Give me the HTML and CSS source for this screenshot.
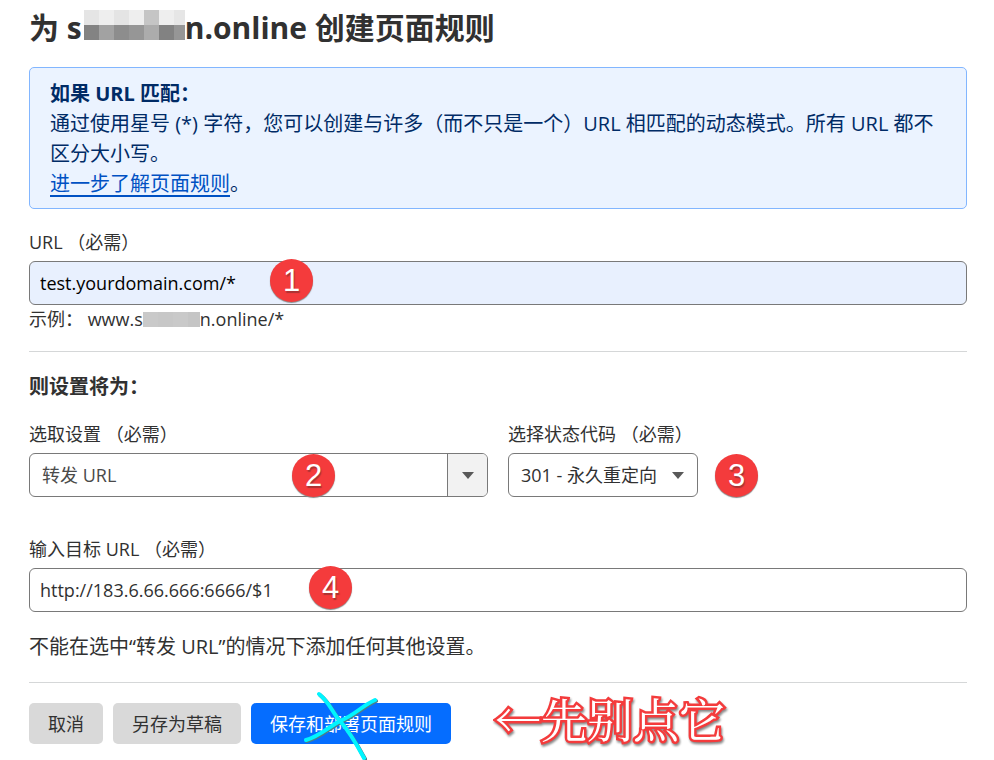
FILE: index.html
```html
<!DOCTYPE html>
<html lang="zh-CN">
<head>
    <meta charset="UTF-8">
    <meta name="viewport" content="width=device-width, initial-scale=1.0">
    <title>创建页面规则</title>
    <link rel="stylesheet" href="styles.css">
</head>
<body>
    <main class="page">
        <h1>为 s<svg class="mosaic" width="101" height="30" viewBox="0 0 101 30" shape-rendering="crispEdges" aria-hidden="true">
            <rect width="101" height="15" fill="#eeeeee"/>
            <rect width="15" height="15" fill="#e5e5e5"/>
            <rect x="30" width="15" height="15" fill="#e4e4e4"/>
            <rect x="60" width="15" height="15" fill="#c5c5c5"/>
            <rect x="90" width="11" height="15" fill="#e6e6e6"/>
            <rect y="15" width="15" height="15" fill="#838383"/>
            <rect x="15" y="15" width="15" height="15" fill="#a2a2a2"/>
            <rect x="30" y="15" width="15" height="15" fill="#8d8d8d"/>
            <rect x="45" y="15" width="15" height="15" fill="#969696"/>
            <rect x="60" y="15" width="15" height="15" fill="#acacac"/>
            <rect x="75" y="15" width="15" height="15" fill="#828282"/>
            <rect x="90" y="15" width="11" height="15" fill="#969696"/>
        </svg>n.online 创建页面规则</h1>

        <section class="info-box">
            <strong>如果 URL 匹配：</strong>
            <p>通过使用星号 (*) 字符，您可以创建与许多（而不只是一个）URL 相匹配的动态模式。所有 URL 都不区分大小写。</p>
            <p><a href="#">进一步了解页面规则</a>。</p>
        </section>

        <form>
            <div class="field">
                <label for="url">URL （必需）</label>
                <div class="control">
                    <input id="url" class="autofilled" type="text" value="test.yourdomain.com/*">
                    <span class="badge badge-1">1</span>
                </div>
                <p class="hint">示例： www.s<svg class="mosaic-small" width="57" height="15" viewBox="0 0 57 15" shape-rendering="crispEdges" aria-hidden="true">
                    <rect width="57" height="15" fill="#c9c9c9"/>
                    <rect x="15" width="15" height="15" fill="#c7c7c7"/>
                    <rect x="45" width="12" height="15" fill="#c5c5c5"/>
                </svg>n.online/*</p>
            </div>

            <hr>

            <h2>则设置将为：</h2>
            <div class="row">
                <div class="field">
                    <label for="setting">选取设置 （必需）</label>
                    <div class="control">
                        <select id="setting">
                            <option>转发 URL</option>
                        </select>
                        <span class="arrow arrow-box"></span>
                        <span class="badge badge-2">2</span>
                    </div>
                </div>
                <div class="field">
                    <label for="status">选择状态代码 （必需）</label>
                    <div class="status-line">
                        <div class="control">
                            <select id="status" class="status">
                                <option>301 - 永久重定向</option>
                            </select>
                            <span class="arrow"></span>
                        </div>
                        <span class="badge-inline">3</span>
                    </div>
                </div>
            </div>

            <div class="field">
                <label for="target">输入目标 URL （必需）</label>
                <div class="control">
                    <input id="target" type="text" value="http://183.6.66.666:6666/$1">
                    <span class="badge badge-4">4</span>
                </div>
            </div>

            <p class="note">不能在选中“转发 URL”的情况下添加任何其他设置。</p>

            <hr>

            <div class="actions">
                <button type="button">取消</button>
                <button type="button">另存为草稿</button>
                <div class="crossed">
                    <button type="submit" class="primary">保存和部署页面规则</button>
                    <svg class="cross" width="76" height="72" viewBox="0 0 76 72" aria-hidden="true">
                        <path class="shade" d="M18 6C29 15 31 24 39 33S55 55 63 70M74 12C59 19 54 27 39 33C28 39 17 49 5 52"/>
                        <path d="M17 5C28 14 30 23 38 32S54 54 62 69M73 11C58 18 53 26 38 32C27 38 16 48 4 51"/>
                    </svg>
                </div>
                <span class="remark">←先别点它</span>
            </div>
        </form>
    </main>
</body>
</html>
```
FILE: styles.css
```css
* {
    box-sizing: border-box;
}

body {
    margin: 0;
    background: #fff;
    color: #313131;
    font-family: "Open Sans", "Noto Sans CJK SC", sans-serif;
    font-size: 18px;
    line-height: 24px;
}

.page {
    padding: 8px 27px 16px 29px;
}

h1, h2, p {
    margin: 0;
}

h1 {
    font-size: 30px;
    line-height: 40px;
    white-space: nowrap;
}

.mosaic {
    margin: 0 0 0 2px;
    vertical-align: -1px;
}

.mosaic-small {
    vertical-align: -1px;
}

/* Blue info panel */
.info-box {
    margin: 19px 0 21px;
    padding: 11px 19px 9px 20px;
    border: 1px solid #82b6ff;
    border-radius: 5px;
    background: #ebf3ff;
    color: #002b66;
    font-size: 20px;
    line-height: 30px;
}

.info-box strong {
    display: block;
}

.info-box a {
    color: #0051c3;
    text-decoration: underline;
    text-decoration-thickness: 2px;
    text-underline-offset: 4px;
}

/* Form */
label {
    display: block;
    margin-bottom: 7px;
}

.control {
    position: relative;
}

input, select, button {
    font: inherit;
    color: inherit;
}

input, select {
    display: block;
    width: 100%;
    height: 44px;
    padding: 0 10px;
    border: 1px solid #797979;
    border-radius: 6px;
    background: #fff;
}

select {
    padding: 0 44px 0 12px;
    color: #4a4a4a;
    appearance: none;
}

.status {
    width: 190px;
    padding-right: 36px;
    color: #313131;
}

.autofilled {
    background: #e8f0fe;
    color: #000;
}

.arrow {
    position: absolute;
    top: 1px;
    right: 1px;
    bottom: 1px;
    width: 38px;
    display: flex;
    align-items: center;
    justify-content: center;
    pointer-events: none;
}

.arrow::after {
    content: "";
    border: 6px solid transparent;
    border-top: 7px solid #595959;
    border-bottom: 0;
}

.arrow-box {
    width: 40px;
    border-left: 1px solid #797979;
    border-radius: 0 5px 5px 0;
    background: #f2f2f2;
}

.hint {
    margin-top: 2px;
}

hr {
    margin: 20px 0;
    border: 0;
    border-top: 1px solid #d5d7d8;
}

h2 {
    margin-bottom: 20px;
    font-size: 20px;
    line-height: 30px;
}

.row {
    display: grid;
    grid-template-columns: 1fr 1fr;
    gap: 20px;
    margin-bottom: 40px;
}

.status-line {
    display: flex;
    align-items: center;
    gap: 17px;
}

.note {
    margin-top: 20px;
    font-size: 20px;
    line-height: 30px;
}

/* Numbered red circles */
.badge, .badge-inline {
    width: 43px;
    height: 43px;
    border-radius: 50%;
    background: #f43b3c;
    box-shadow: 0 1px 1px #888;
    color: #fff;
    font-family: "Liberation Sans", Arial, sans-serif;
    font-size: 31px;
    line-height: 44px;
    text-align: center;
    text-shadow: 1px 2px 1px #a33;
}

.badge {
    position: absolute;
    top: 1px;
}

.badge-1 {
    top: -2px;
    left: 241px;
}

.badge-2 {
    left: 263px;
}

.badge-4 {
    top: -2px;
    left: 280px;
}

/* Bottom buttons */
.actions {
    display: flex;
    align-items: flex-start;
    gap: 10px;
}

button {
    display: block;
    height: 41px;
    padding: 0 19px;
    border: 0;
    border-radius: 5px;
    background: #d9d9d9;
    white-space: nowrap;
}

.primary {
    background: #056dff;
    color: #fff;
}

.crossed {
    position: relative;
}

.cross {
    position: absolute;
    top: -14px;
    left: 51px;
    fill: none;
    stroke: #00f5ff;
    stroke-width: 4;
    stroke-linecap: round;
    pointer-events: none;
}

.shade {
    stroke: #4d7f86;
}

.remark {
    margin-left: 34px;
    color: #fff;
    font-family: "Noto Serif CJK SC", "Noto Sans CJK SC", sans-serif;
    font-size: 46px;
    font-weight: 400;
    line-height: 28px;
    white-space: nowrap;
    -webkit-text-stroke: 5px #f43b3c;
    paint-order: stroke fill;
    filter: drop-shadow(1px 2px 1px #888);
}
```
